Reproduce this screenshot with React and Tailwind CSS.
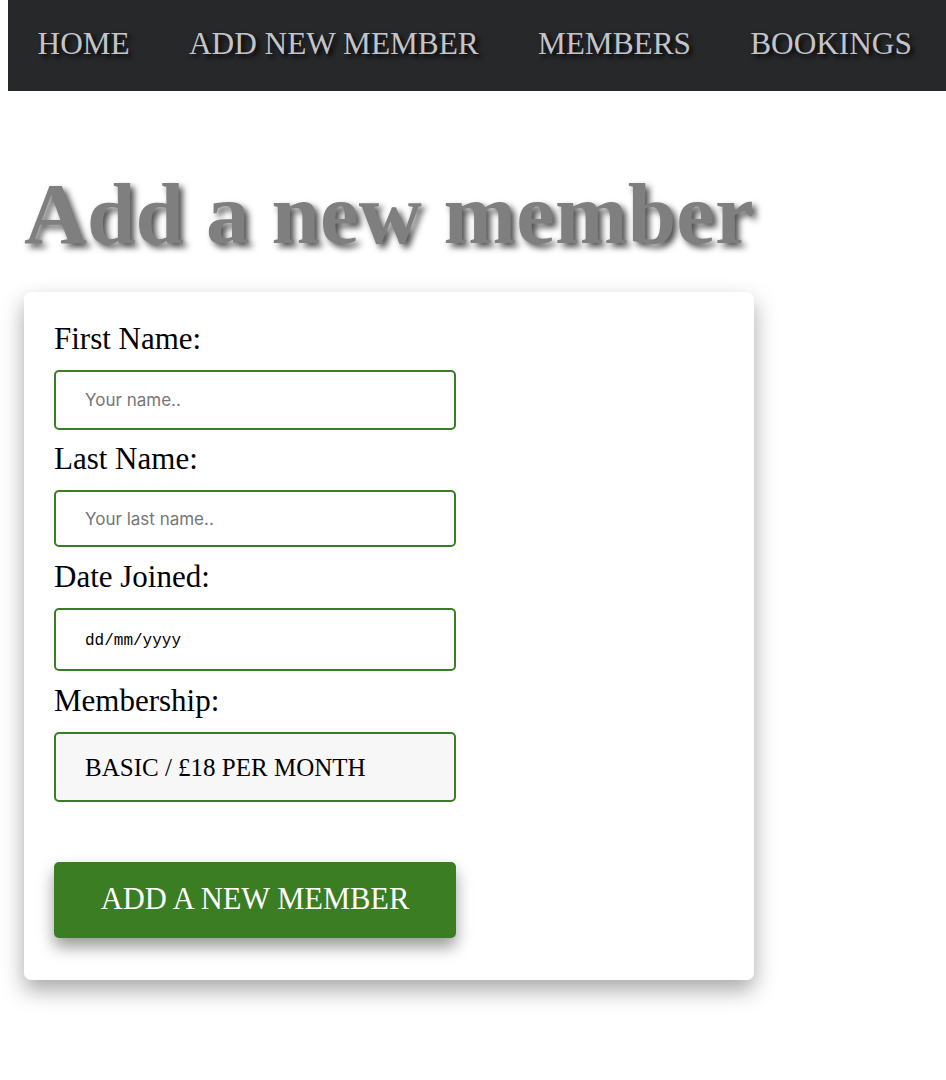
export default function App() {
  const serif = { fontFamily: '"Liberation Serif", "Times New Roman", serif' };
  return (
    <div className="min-h-screen bg-white overflow-hidden" style={serif}>
      <nav className="ml-[8px] flex h-[91px] w-[1000px] items-center bg-[#27282a] pb-[3px]">
        {["HOME", "ADD NEW MEMBER", "MEMBERS", "BOOKINGS"].map((t) => (
          <span
            key={t}
            className="px-[29.6px] text-[31.3px] leading-none text-[#c3c4ca] [text-shadow:3px_3px_5px_#000]"
          >
            {t}
          </span>
        ))}
      </nav>

      <div className="pl-[24px]">
        <h1 className="mt-[79px] text-[87.3px] font-bold leading-none text-[#7f7f7f] [text-shadow:4px_4px_6px_rgba(0,0,0,0.7)]">
          Add a new member
        </h1>

        <div className="mt-[35px] w-[730px] rounded-[7px] bg-white px-[30px] pt-[30px] pb-[42px] shadow-[0_10px_22px_rgba(0,0,0,0.35)]">
          <label className="block text-[31px] leading-[34px] text-black">First Name:</label>
          <input
            placeholder="Your name.."
            className="mt-[14px] block h-[60px] w-[402px] rounded-[5px] border-2 border-[#3a7d24] bg-white pl-[29px] text-[17px] outline-none placeholder:text-[#767676]"
            style={{ fontFamily: 'Inter, "Noto Sans", sans-serif' }}
          />
          <label className="mt-[12px] block text-[31px] leading-[34px] text-black">Last Name:</label>
          <input
            placeholder="Your last name.."
            className="mt-[14px] block h-[57px] w-[402px] rounded-[5px] border-2 border-[#3a7d24] bg-white pl-[29px] text-[17px] outline-none placeholder:text-[#767676]"
            style={{ fontFamily: 'Inter, "Noto Sans", sans-serif' }}
          />
          <label className="mt-[13px] block text-[31px] leading-[34px] text-black">Date Joined:</label>
          <div
            className="mt-[14px] flex h-[63px] w-[402px] items-center rounded-[5px] border-2 border-[#3a7d24] bg-white pl-[29px] pt-[2px] text-[16px] text-black"
            style={{ fontFamily: '"Liberation Mono", "Courier New", monospace' }}
          >
            dd/mm/yyyy
          </div>
          <label className="mt-[13px] block text-[31px] leading-[34px] text-black">Membership:</label>
          <div className="mt-[14px] flex h-[70px] w-[402px] items-center rounded-[5px] border-2 border-[#3a7d24] bg-[#f7f7f7] pl-[29px] text-[25px] text-black">
            BASIC / £18 PER MONTH
          </div>
          <button className="mt-[60px] flex h-[76px] w-[402px] items-center justify-center rounded-[5px] bg-[#3a7d23] text-[30.5px] text-white shadow-[0_9px_16px_rgba(0,0,0,0.4)]">
            ADD A NEW MEMBER
          </button>
        </div>
      </div>
    </div>
  );
}
